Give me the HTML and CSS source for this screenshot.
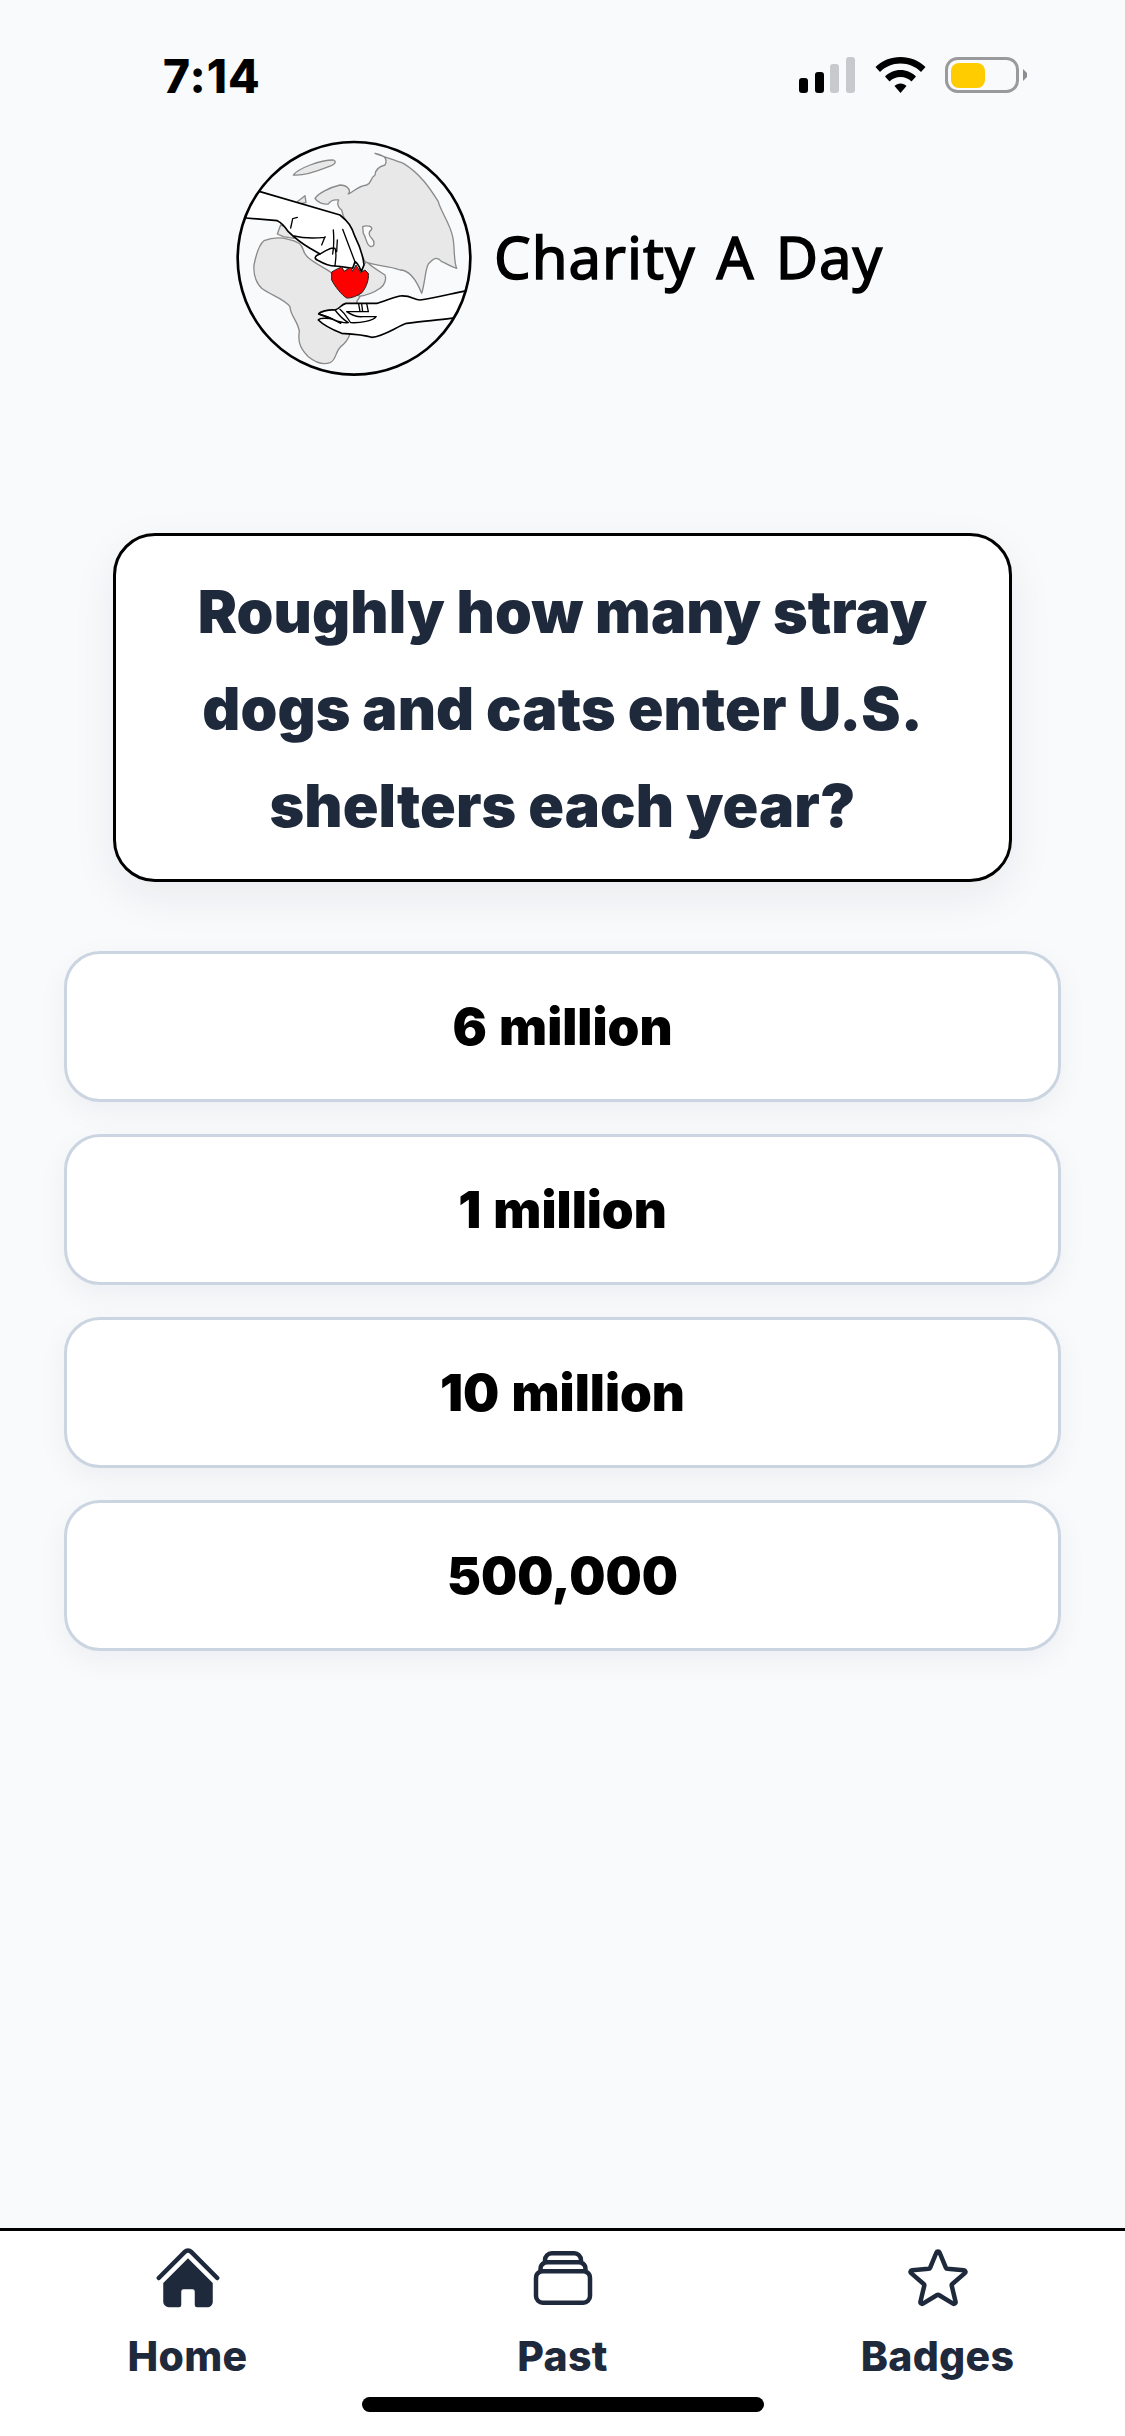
FILE: index.html
```html
<!DOCTYPE html>
<html lang="en">
<head>
<meta charset="utf-8">
<title>Charity A Day</title>
<link rel="stylesheet" href="styles.css">
</head>
<body>
<div class="app">
  <div class="status">
    <span class="time">7:14</span>
    <div class="status-icons">
      <svg class="ic-signal" viewBox="0 0 56 36"><rect class="on" x="0" y="21" width="9" height="15" rx="3"/><rect class="on" x="16" y="15" width="9" height="21" rx="3"/><rect class="off" x="31" y="7" width="9" height="29" rx="3"/><rect class="off" x="47" y="0" width="9" height="36" rx="3"/></svg>
      <svg class="ic-wifi" viewBox="0 0 51 36"><path d="M.5 10C7 3.500 16 0 25.500 0S44 3.500 50.500 10L46 15C40.500 9.500 33.500 6.500 25.500 6.500S10.500 9.500 5 15Z"/><path d="M10 19.500C14 15.500 19.500 13 25.500 13S37 15.500 41 19.500L36.500 24.500C33.500 21.500 29.800 20 25.500 20S17.500 21.500 14.500 24.500Z"/><path d="M19.500 29C21 27.500 23 26.500 25.500 26.500S30 27.500 31.500 29L25.500 36Z"/></svg>
      <svg class="ic-batt" viewBox="0 0 82 36"><rect class="batt-shell" x="1.500" y="1.500" width="71" height="33" rx="11"/><rect class="batt-fill" x="6" y="6" width="34" height="25" rx="8"/><path class="batt-tip" d="M78 12L82 16V20L78 24Z"/></svg>
    </div>
  </div>

  <header class="brand">
    <svg class="globe" viewBox="0 0 780 780">
      <defs><clipPath id="g"><circle cx="402" cy="385" r="349"/></clipPath></defs>
      <g clip-path="url(#g)">
        <path class="land" d="M220 135C235 115 300 90 340 90C352 95 345 105 320 112C295 122 250 138 220 135Z"/>
        <path class="land" d="M232 215L255 197L258 218L235 222Z"/>
        <path class="land" d="M172 312L182 285L210 295L222 325L190 320Z"/>
        <path class="land" d="M440 395C455 410 480 425 495 435C500 445 495 465 480 475C460 490 430 498 410 500L400 440Z"/>
        <path class="land" d="M465 70C490 75 505 85 495 105C470 112 465 125 465 135C450 145 455 160 440 165C415 168 400 185 385 192C395 180 380 165 360 165C330 172 295 190 285 205C290 215 310 225 325 222C335 205 350 210 356 210C350 222 355 232 365 240L370 258L435 395C470 410 500 405 540 420C565 420 585 440 605 490C615 460 615 420 625 402C640 385 650 378 665 395C680 400 690 410 710 415C700 390 705 350 698 320C690 280 660 240 655 215C630 175 600 130 550 100C525 90 490 80 465 70Z"/>
        <path class="lake" d="M428 290C440 285 458 288 455 298C445 305 445 315 455 325C465 335 465 350 452 350C438 345 440 325 430 310Z"/>
        <path class="land" d="M132 332C150 325 175 320 205 328C230 332 245 340 250 360C255 385 290 400 330 425L420 500C405 515 405 540 400 570C395 600 390 630 362 650C345 665 350 690 330 698C310 705 290 700 265 680C245 660 232 640 238 605C235 575 210 555 210 530C190 505 150 495 125 475C105 455 100 430 102 405C108 375 115 345 132 332Z"/>
        <path class="hand" d="M80 172L120 185L360 255C385 275 395 290 405 320C420 350 430 385 432 405L424 424C418 410 415 400 405 395L398 415C390 415 372 410 345 408C325 408 310 400 296 392C285 388 278 380 300 372L270 355C245 340 225 325 205 305C195 290 185 278 172 272L78 264L40 262Z"/>
        <path class="finger" d="M212 294L218 266L232 262M222 318C250 325 285 325 315 322M305 345L315 320M340 300C342 325 342 350 338 372M368 298C380 330 395 370 406 398M352 330L350 365M300 372C320 360 335 350 345 355C352 375 345 395 345 408"/>
        <path class="hand" d="M790 472L740 482C690 492 640 505 600 510C580 510 575 495 540 498C510 505 490 515 470 520H378C360 525 362 535 345 540C325 538 300 545 296 552C310 558 325 560 335 566C320 565 300 562 295 570C310 585 340 600 365 610C400 612 435 615 455 622C490 620 530 590 560 580C600 575 650 570 692 565L770 556Z"/>
        <path class="finger" d="M360 538C380 555 385 570 392 578M345 540C360 560 372 570 385 578M380 545H445L440 520M428 545L425 522M420 545L416 522M380 545C395 555 410 562 428 560H468C462 572 420 580 392 578M298 552C320 560 345 570 362 580M335 566C350 572 365 580 385 578"/>
        <path class="heart" d="M335 426C345 420 358 414 365 410L372 424L392 412L398 424L408 405L422 428L435 420L445 430C447 448 440 470 426 488C410 498 395 505 380 504C365 495 345 470 335 450Z"/>
      </g>
      <circle class="ring" cx="402" cy="385" r="349"/>
    </svg>
    <span class="wordmark">Charity A Day</span>
  </header>

  <main class="quiz">
    <h1 class="question">Roughly how many stray dogs and cats enter U.S. shelters each year?</h1>
    <div class="options">
      <button class="option">6 million</button>
      <button class="option">1 million</button>
      <button class="option">10 million</button>
      <button class="option">500,000</button>
    </div>
  </main>

  <nav class="tabs">
    <a class="tab">
      <svg class="tab-icon solid" viewBox="0 0 24 24"><path d="M11.47 3.841a.75.75 0 0 1 1.06 0l8.69 8.69a.75.75 0 1 0 1.06-1.061l-8.689-8.69a2.25 2.25 0 0 0-3.182 0l-8.69 8.69a.75.75 0 1 0 1.061 1.06l8.69-8.689Z"/><path d="m12 5.432 8.159 8.159c.03.03.06.058.091.086v6.198c0 1.035-.84 1.875-1.875 1.875H15a.75.75 0 0 1-.75-.75v-4.5a.75.75 0 0 0-.75-.75h-3a.75.75 0 0 0-.75.75V21a.75.75 0 0 1-.75.75H5.625a1.875 1.875 0 0 1-1.875-1.875v-6.198a2.29 2.29 0 0 0 .091-.086L12 5.432Z"/></svg>
      <span>Home</span>
    </a>
    <a class="tab">
      <svg class="tab-icon line" viewBox="0 0 24 24"><path d="M6 6.878V6a2.250 2.250 0 0 1 2.250-2.250h7.500A2.250 2.250 0 0 1 18 6v.878m-12 0c.235-.083.487-.128.75-.128h10.500c.263 0 .515.045.75.128m-12 0A2.250 2.250 0 0 0 4.500 9v.878m13.500-3A2.250 2.250 0 0 1 19.500 9v.878m0 0a2.246 2.246 0 0 0-.75-.128H5.250c-.263 0-.515.045-.75.128m15 0A2.250 2.250 0 0 1 21 12v6a2.250 2.250 0 0 1-2.250 2.250H5.250A2.250 2.250 0 0 1 3 18v-6c0-.98.626-1.813 1.500-2.122"/></svg>
      <span>Past</span>
    </a>
    <a class="tab">
      <svg class="tab-icon line" viewBox="0 0 24 24"><path d="M11.480 3.499a.562.562 0 0 1 1.040 0l2.125 5.111a.563.563 0 0 0 .475.345l5.518.442c.499.04.701.663.321.988l-4.204 3.602a.563.563 0 0 0-.182.557l1.285 5.385a.562.562 0 0 1-.84.61l-4.725-2.885a.562.562 0 0 0-.586 0L6.982 20.540a.562.562 0 0 1-.84-.61l1.285-5.386a.562.562 0 0 0-.182-.557l-4.204-3.602a.562.562 0 0 1 .321-.988l5.518-.442a.563.563 0 0 0 .475-.345L11.480 3.500Z"/></svg>
      <span>Badges</span>
    </a>
    <div class="home-bar"></div>
  </nav>
</div>
</body>
</html>
```

FILE: styles.css
```css
* { box-sizing: border-box; }
html, body { margin: 0; padding: 0; }
body { background: #f9fafc; font-family: Inter, "Liberation Sans", sans-serif; }

.app { width: 1125px; height: 2436px; display: flex; flex-direction: column; overflow: hidden; }

/* status bar */
.status { height: 130px; flex: none; display: flex; justify-content: space-between; align-items: flex-start; padding: 56px 98px 0 163px; }
.time { font-size: 46px; font-weight: 800; line-height: 40px; letter-spacing: 1px; color: #000; }
.status-icons { display: flex; align-items: flex-start; padding-top: 1px; }
.ic-signal { width: 56px; height: 36px; margin-right: 20px; }
.ic-wifi { width: 51px; height: 36px; margin-right: 19px; }
.ic-batt { width: 82px; height: 36px; }
.on { fill: #000; }
.off { fill: #c7c9cc; }
.ic-wifi path { fill: #000; }
.batt-shell { fill: none; stroke: #9a9a9d; stroke-width: 3; }
.batt-fill { fill: #ffcc00; }
.batt-tip { fill: #8e8e92; }

/* brand */
.brand { flex: none; height: 260px; display: flex; align-items: center; padding-left: 220px; }
.globe { width: 260px; height: 260px; flex: none; }
.ring { fill: none; stroke: #000; stroke-width: 8; }
.land { fill: #e8e8e8; stroke: #8a8a8a; stroke-width: 4; stroke-linejoin: round; }
.lake { fill: #f9fafc; stroke: #8a8a8a; stroke-width: 4; }
.hand { fill: #fff; stroke: #000; stroke-width: 5; stroke-linejoin: round; }
.finger { fill: none; stroke: #000; stroke-width: 4; stroke-linecap: round; }
.heart { fill: #fe0000; stroke: #222; stroke-width: 3; stroke-linejoin: round; }
.wordmark { margin-left: 14px; font-family: "Noto Sans", sans-serif; font-size: 58px; line-height: 70px; letter-spacing: 1px; word-spacing: 5px; color: #000; -webkit-text-stroke: 1.500px #000; white-space: nowrap; position: relative; top: -3px; }

/* quiz */
.quiz { flex: 1; display: flex; flex-direction: column; padding: 143px 64px 0; }
.question { width: 899px; margin: 0 auto; padding: 27px 40px 0; height: 349px; background: #fff; border: 3px solid #000; border-radius: 42px; box-shadow: 0 15px 45px rgba(15, 23, 42, .07); color: #1e293b; font-size: 59px; font-weight: 900; line-height: 97px; text-align: center; letter-spacing: .1px; }
.options { display: flex; flex-direction: column; gap: 32px; margin-top: 69px; }
.option { height: 151px; width: 100%; background: #fff; border: 3px solid #cbd5e1; border-radius: 36px; box-shadow: 0 9px 30px rgba(15, 23, 42, .05); color: #000; font-family: inherit; font-size: 51px; font-weight: 900; text-align: center; padding: 0; word-spacing: 2px; }

/* tabs */
.tabs { position: relative; flex: none; height: 208px; background: #fff; border-top: 3px solid #000; display: grid; grid-template-columns: repeat(3, 375px); align-content: start; padding-top: 11px; }
.tab { display: flex; flex-direction: column; align-items: center; color: #1e293b; font-size: 41px; font-weight: 800; line-height: 48px; letter-spacing: .3px; }
.tab-icon { width: 72px; height: 72px; margin-bottom: 18px; }
.solid { fill: #1e293b; }
.line { fill: none; stroke: #1e293b; stroke-width: 1.500; stroke-linecap: round; stroke-linejoin: round; }
.home-bar { position: absolute; left: 362px; top: 166px; width: 402px; height: 15px; border-radius: 8px; background: #000; }
```
